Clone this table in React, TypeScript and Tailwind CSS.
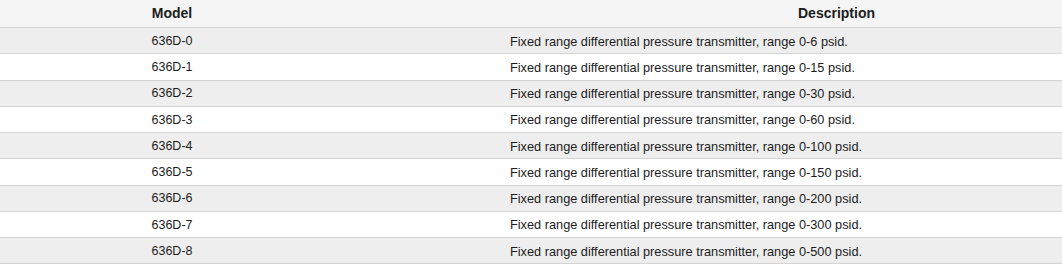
import React from "react";

const rows = [
  ["636D-0", "0-6"],
  ["636D-1", "0-15"],
  ["636D-2", "0-30"],
  ["636D-3", "0-60"],
  ["636D-4", "0-100"],
  ["636D-5", "0-150"],
  ["636D-6", "0-200"],
  ["636D-7", "0-300"],
  ["636D-8", "0-500"],
];

export default function App() {
  return (
    <div
      className="w-[1062px] h-[266px] overflow-hidden bg-white text-[#1c1c1c]"
      style={{ fontFamily: '"Liberation Sans", Arial, sans-serif' }}
    >
      <div className="flex h-[28px] items-center border-b border-[#d4d4d4] bg-[#f5f5f5] text-[14px] font-bold">
        <div className="w-[344px] text-center">Model</div>
        <div className="flex-1 pr-[187px] text-right">Description</div>
      </div>
      {rows.map(([m, r], i) => (
        <div
          key={m}
          className={
            "flex h-[26.25px] items-center border-b border-[#d4d4d4] pt-[1px] " +
            (i % 2 === 0 ? "bg-[#eeeeee]" : "bg-white")
          }
        >
          <div className="w-[344px] text-center text-[12.5px]">{m}</div>
          <div className="flex-1 pl-[166px] text-[12.75px]">
            Fixed range differential pressure transmitter, range {r} psid.
          </div>
        </div>
      ))}
    </div>
  );
}
